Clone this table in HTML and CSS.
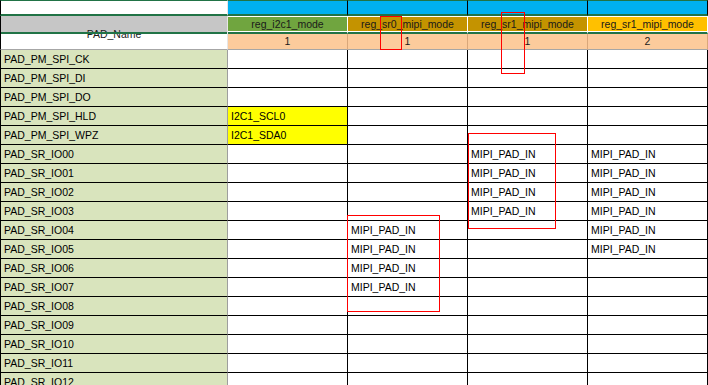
FILE: index.html
```html
<!DOCTYPE html>
<html>
<head>
<meta charset="utf-8">
<link rel="stylesheet" href="styles.css">
</head>
<body>
<div class="wrap">
  <div class="sheet">
    <!-- header row A -->
    <div class="c a first"></div>
    <div class="c a blue"></div>
    <div class="c a blue"></div>
    <div class="c a blue"></div>
    <div class="c a blue"></div>
    <!-- header row B -->
    <div class="c name"><span class="name-text">PAD_Name</span></div>
    <div class="c b green">reg_i2c1_mode</div>
    <div class="c b gold">reg_sr0_mipi_mode</div>
    <div class="c b gold">reg_sr1_mipi_mode</div>
    <div class="c b amber">reg_sr1_mipi_mode</div>
    <!-- header row C -->
    <div class="c hc">1</div>
    <div class="c hc">1</div>
    <div class="c hc">1</div>
    <div class="c hc">2</div>

    <div class="c d pad">PAD_PM_SPI_CK</div><div class="c d"></div><div class="c d"></div><div class="c d"></div><div class="c d"></div>
    <div class="c d pad">PAD_PM_SPI_DI</div><div class="c d"></div><div class="c d"></div><div class="c d"></div><div class="c d"></div>
    <div class="c d pad">PAD_PM_SPI_DO</div><div class="c d"></div><div class="c d"></div><div class="c d"></div><div class="c d"></div>
    <div class="c d pad">PAD_PM_SPI_HLD</div><div class="c d yellow">I2C1_SCL0</div><div class="c d"></div><div class="c d"></div><div class="c d"></div>
    <div class="c d pad">PAD_PM_SPI_WPZ</div><div class="c d yellow">I2C1_SDA0</div><div class="c d"></div><div class="c d"></div><div class="c d"></div>
    <div class="c d pad">PAD_SR_IO00</div><div class="c d"></div><div class="c d"></div><div class="c d">MIPI_PAD_IN</div><div class="c d">MIPI_PAD_IN</div>
    <div class="c d pad">PAD_SR_IO01</div><div class="c d"></div><div class="c d"></div><div class="c d">MIPI_PAD_IN</div><div class="c d">MIPI_PAD_IN</div>
    <div class="c d pad">PAD_SR_IO02</div><div class="c d"></div><div class="c d"></div><div class="c d">MIPI_PAD_IN</div><div class="c d">MIPI_PAD_IN</div>
    <div class="c d pad">PAD_SR_IO03</div><div class="c d"></div><div class="c d"></div><div class="c d">MIPI_PAD_IN</div><div class="c d">MIPI_PAD_IN</div>
    <div class="c d pad">PAD_SR_IO04</div><div class="c d"></div><div class="c d">MIPI_PAD_IN</div><div class="c d"></div><div class="c d">MIPI_PAD_IN</div>
    <div class="c d pad">PAD_SR_IO05</div><div class="c d"></div><div class="c d">MIPI_PAD_IN</div><div class="c d"></div><div class="c d">MIPI_PAD_IN</div>
    <div class="c d pad">PAD_SR_IO06</div><div class="c d"></div><div class="c d">MIPI_PAD_IN</div><div class="c d"></div><div class="c d"></div>
    <div class="c d pad">PAD_SR_IO07</div><div class="c d"></div><div class="c d">MIPI_PAD_IN</div><div class="c d"></div><div class="c d"></div>
    <div class="c d pad">PAD_SR_IO08</div><div class="c d"></div><div class="c d"></div><div class="c d"></div><div class="c d"></div>
    <div class="c d pad">PAD_SR_IO09</div><div class="c d"></div><div class="c d"></div><div class="c d"></div><div class="c d"></div>
    <div class="c d pad">PAD_SR_IO10</div><div class="c d"></div><div class="c d"></div><div class="c d"></div><div class="c d"></div>
    <div class="c d pad">PAD_SR_IO11</div><div class="c d"></div><div class="c d"></div><div class="c d"></div><div class="c d"></div>
    <div class="c d pad">PAD_SR_IO12</div><div class="c d"></div><div class="c d"></div><div class="c d"></div><div class="c d"></div>
  </div>
  <div class="mark box1"></div>
  <div class="mark box2"></div>
  <div class="mark box3"></div>
  <div class="mark box4"></div>
</div>
</body>
</html>
```

FILE: styles.css
```css
html, body {
  margin: 0;
  padding: 0;
  background: #ffffff;
  overflow: hidden;
}

.wrap {
  position: relative;
  width: 708px;
  height: 385px;
  overflow: hidden;
  font-family: "Liberation Sans", Arial, sans-serif;
  font-size: 10.5px;
  color: #000;
}

.sheet {
  display: grid;
  grid-template-columns: 228px repeat(4, 120px);
  grid-auto-rows: auto;
}

.c {
  box-sizing: border-box;
  white-space: nowrap;
  overflow: hidden;
}

/* header row A */
.a {
  height: 16px;
  border-top: 1px solid #217346;
  border-bottom: 2px solid #217346;
}
.a.first {
  background: #fff;
  border-left: 1px solid #000;
  border-right: 1px solid #e6e6e6;
}
.a.blue {
  background: #00b0f0;
  border-right: 1px solid #000;
}

/* merged PAD_Name cell */
.name {
  position: relative;
  grid-row: span 2;
  height: 34px;
  border-left: 1px solid #000;
  border-right: 1px solid #e6e6e6;
  border-bottom: 1px solid #a6a6a6;
  background: linear-gradient(#c6c6c6 0, #c6c6c6 16px, #ffffff 16px);
  text-align: center;
  padding-top: 11px;
  line-height: 14px;
  color: #1a1a1a;
}
.name::after {
  content: "";
  position: absolute;
  left: 0;
  right: 0;
  top: 16px;
  height: 2px;
  background: #217346;
}

/* header row B */
.b {
  height: 18px;
  border-top: 1px solid #fff;
  border-bottom: 2px solid #217346;
  border-right: 1px solid #fff;
  box-shadow: inset 0 -1px 0 #fff;
  text-align: center;
  line-height: 14px;
  color: #1a1a1a;
}
.green { background: #70a53f; }
.gold { background: #c49300; }
.amber { background: #ffc000; }

/* header row C */
.hc {
  height: 16px;
  background: #fccb9c;
  border-right: 1px solid #d9a77a;
  border-bottom: 1px solid #a6a6a6;
  text-align: center;
  line-height: 15px;
  color: #1a1a1a;
}

/* data rows */
.d {
  height: 19px;
  border-right: 1px solid #000;
  border-bottom: 1px solid #000;
  padding-left: 3px;
  line-height: 18px;
  background: #fff;
}
.d.pad {
  background: #d9e4bd;
  border-left: 1px solid #000;
  border-right: 1px solid #9e9e9e;
  padding-left: 3px;
}
.d.yellow {
  background: #ffff00;
}

/* red annotation boxes */
.mark {
  position: absolute;
  box-sizing: border-box;
  border: 1px solid #ff0000;
}
.box1 { left: 380px; top: 16px; width: 22px; height: 34px; }
.box2 { left: 501px; top: 12px; width: 24px; height: 62px; }
.box3 { left: 468px; top: 133px; width: 88px; height: 96px; }
.box4 { left: 347px; top: 215px; width: 93px; height: 97px; }
```
